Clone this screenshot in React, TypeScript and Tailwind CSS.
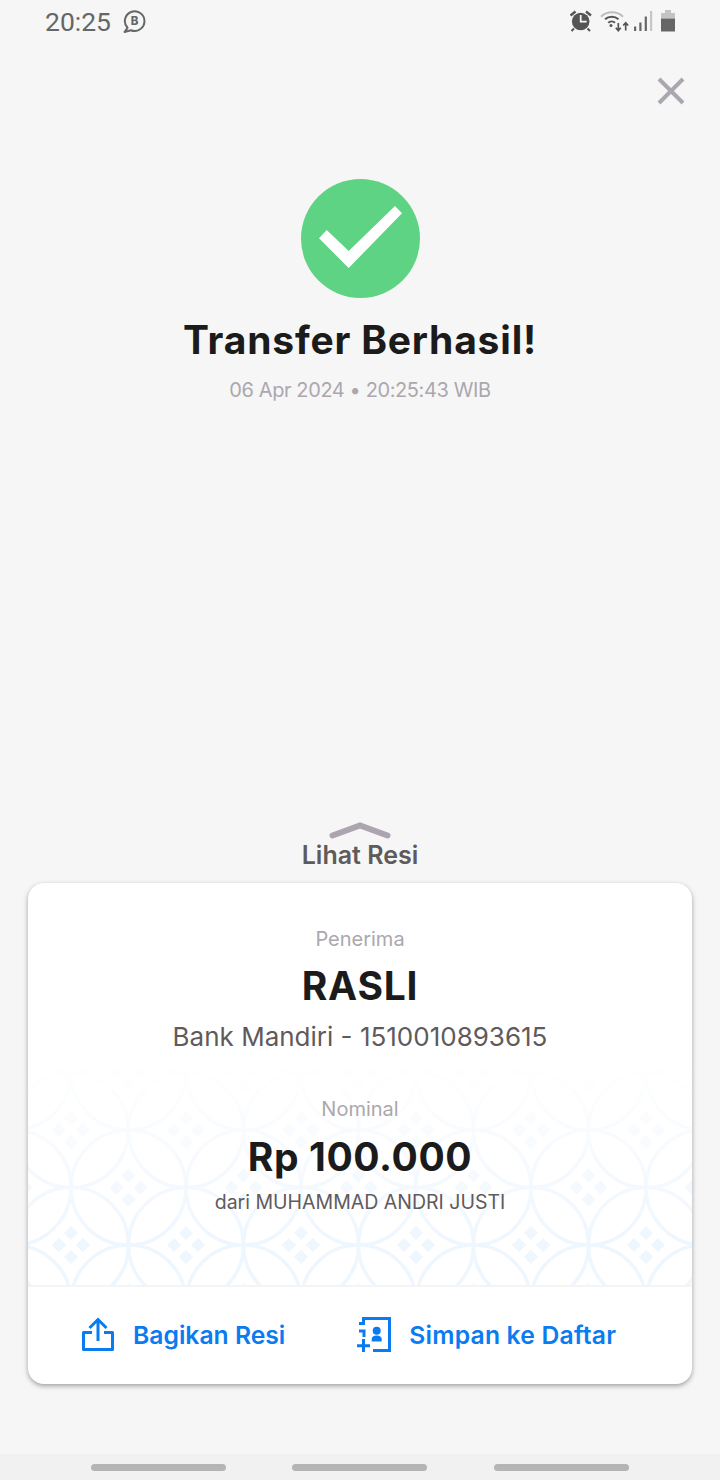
const FONT = "font-['Inter','Noto_Sans',sans-serif]";

function WhatsAppBusiness() {
  return (
    <svg width="24" height="24" viewBox="0 0 24 24" fill="none">
      <path
        d="M5.500 17.800A9.800 9.800 0 1 1 9 20.200L2.500 22z"
        stroke="#666"
        strokeWidth="2"
        strokeLinejoin="round"
      />
      <text x="12.500" y="15" textAnchor="middle" fontSize="11.500" fontWeight="800" fill="#666">
        B
      </text>
    </svg>
  );
}

function StatusIcons() {
  return (
    <svg width="108" height="24" viewBox="0 0 108 24" fill="none" className="mt-[-2px]">
      {/* alarm */}
      <circle cx="11.700" cy="12.500" r="8.800" fill="#555" />
      <path d="M11.700 6v6.700h6" stroke="#f6f6f6" strokeWidth="1.800" />
      <path d="M1.500 6.500L6.500 2.500M22 6.500L17 2.500" stroke="#555" strokeWidth="2.400" />
      <path d="M2.500 22l2.500-2.500M21 22l-2.500-2.500" stroke="#555" strokeWidth="2" />
      {/* wifi */}
      <path d="M32 7.700a16 16 0 0 1 22 0" stroke="#bdbdbd" strokeWidth="2" />
      <path d="M36 10.300a10 10 0 0 1 13.500 0" stroke="#555" strokeWidth="2" />
      <path d="M39.300 13.700a5 5 0 0 1 6.700 0" stroke="#555" strokeWidth="2" />
      <circle cx="42" cy="16.500" r="1.500" fill="#555" />
      <path d="M49.300 14v7.500M46.800 18.800l2.500 2.800 2.500-2.800" stroke="#555" strokeWidth="1.700" />
      <path d="M56.700 21.500V14M54.200 16.500l2.500-2.800 2.500 2.800" stroke="#555" strokeWidth="1.700" />
      {/* signal */}
      <rect x="65" y="17.500" width="2.200" height="4.500" fill="#666" />
      <rect x="70.300" y="13.500" width="2.200" height="8.500" fill="#666" />
      <rect x="75.700" y="7.500" width="2.200" height="14.500" fill="#666" />
      <rect x="81" y="2" width="2.200" height="20" fill="#c6c6c6" />
      {/* battery */}
      <path d="M96 1h6v3h4v5.500H92V4h4z" fill="#c4c4c4" />
      <rect x="92" y="9.500" width="14" height="13" fill="#666" />
    </svg>
  );
}

function Diamonds({ x, y }: { x: number; y: number }) {
  return (
    <g transform={`translate(${x} ${y})`}>
      <path d="M0 -19l7 7-7 7-7-7z" />
      <path d="M0 5l7 7-7 7-7-7z" />
      <path d="M-19 0l7-7 7 7-7 7z" />
      <path d="M5 0l7-7 7 7-7 7z" />
    </g>
  );
}

function Kawung() {
  return (
    <svg className="absolute inset-0 h-full w-full" fill="none">
      <defs>
        <pattern id="kawung" width="115" height="115" patternUnits="userSpaceOnUse" x="43" y="71">
          <g stroke="#eef6fe" strokeWidth="3.500">
            <circle cx="0" cy="0" r="57.500" />
            <circle cx="115" cy="0" r="57.500" />
            <circle cx="0" cy="115" r="57.500" />
            <circle cx="115" cy="115" r="57.500" />
            <circle cx="57.500" cy="57.500" r="57.500" />
          </g>
          <g fill="#eef6fe">
            <Diamonds x={0} y={0} />
            <Diamonds x={115} y={0} />
            <Diamonds x={0} y={115} />
            <Diamonds x={115} y={115} />
            <Diamonds x={57.5} y={57.5} />
          </g>
        </pattern>
        <linearGradient id="kawungFade" x1="0" y1="0" x2="0" y2="1">
          <stop offset="0" stopColor="#fff" stopOpacity="1" />
          <stop offset="0.35" stopColor="#fff" stopOpacity="0.6" />
          <stop offset="0.85" stopColor="#fff" stopOpacity="0" />
        </linearGradient>
      </defs>
      <rect width="100%" height="100%" fill="url(#kawung)" />
      <rect width="100%" height="100%" fill="url(#kawungFade)" />
    </svg>
  );
}

function ShareIcon() {
  return (
    <svg width="34" height="36" viewBox="0 0 34 36" fill="none" stroke="#0a7cf0" strokeWidth="3">
      <path d="M11 15.500H2.500v17h29v-17H23" strokeLinejoin="round" />
      <path d="M17 24V3M8.500 11L17 2.500 25.500 11" />
    </svg>
  );
}

function ContactAddIcon() {
  return (
    <svg width="34" height="36" viewBox="0 0 34 36" fill="none">
      <path d="M2 6.500H6.500V1.500H32.500V33.500H16" stroke="#0a7cf0" strokeWidth="3" />
      <path d="M2 14H7V20" stroke="#0a7cf0" strokeWidth="3" />
      <path d="M0 28.700h13M6.500 22v13" stroke="#0a7cf0" strokeWidth="3" />
      <circle cx="19.700" cy="13.700" r="4" fill="#0a7cf0" />
      <path d="M14.700 24.500v-2.500c0-2 2-3.500 5-3.500s5 1.500 5 3.500v2.500z" fill="#0a7cf0" />
    </svg>
  );
}

export default function App() {
  return (
    <div className={`${FONT} flex h-[1480px] w-[720px] flex-col bg-[#f6f6f6]`}>
      <div className="flex h-[44px] items-center justify-between pl-[45px] pr-[43px]">
        <div className="flex items-center gap-[11px]">
          <span className="text-[26.500px] leading-none text-[#666] font-['Roboto',sans-serif]">20:25</span>
          <WhatsAppBusiness />
        </div>
        <StatusIcons />
      </div>

      <div className="flex justify-end pr-[35px] pt-[33px]">
        <svg width="28" height="28" viewBox="0 0 28 28" fill="none">
          <path d="M2 2L26 26M26 2L2 26" stroke="#aca7ae" strokeWidth="4" />
        </svg>
      </div>

      <div className="flex flex-col items-center pt-[74px]">
        <div className="h-[119px] w-[119px] rounded-full bg-[#5ed384]">
          <svg width="119" height="119" viewBox="0 0 119 119">
            <path d="M101 34.300L94 27 47.700 72 25.700 51 18 59.300 47.700 89z" fill="#fff" />
          </svg>
        </div>
        <h1 className="mt-[20px] text-[39px] font-bold leading-[44px] tracking-[0.8px] text-[#1b1b1b]">
          Transfer Berhasil!
        </h1>
        <p className="mt-[16px] text-[20px] leading-[24px] tracking-[-0.4px] text-[#aca7ae]">
          06 Apr 2024 • 20:25:43 WIB
        </p>
      </div>

      <div className="flex-1" />

      <div className="flex flex-col items-center">
        <svg width="62" height="18" viewBox="0 0 62 18" fill="none">
          <path d="M3.500 13.500L31 3.500l27.500 10" stroke="#aca4ae" strokeWidth="6" strokeLinecap="round" />
        </svg>
        <span className="text-[25px] font-semibold leading-[30px] text-[#5f5a5c]">Lihat Resi</span>
      </div>

      <div className="mx-[28px] mt-[13px] overflow-hidden rounded-[16px] bg-white shadow-[0_2px_5px_rgba(0,0,0,0.35)]">
        <div className="relative h-[402px]">
          <div className="absolute inset-x-0 bottom-0 h-[226px]">
            <Kawung />
          </div>
          <div className="relative flex flex-col items-center pt-[44px]">
            <span className="text-[20px] leading-[24px] text-[#aca7ae]">Penerima</span>
            <span className="mt-[11px] text-[39px] font-bold leading-[48px] tracking-[0.8px] text-[#1b1b1b]">RASLI</span>
            <span className="mt-[9px] text-[26px] leading-[36px] text-[#5f5a5c]">Bank Mandiri - 1510010893615</span>
            <span className="mt-[42px] text-[20px] leading-[24px] text-[#aca7ae]">Nominal</span>
            <span className="mt-[12px] text-[39px] font-bold leading-[48px] tracking-[0.6px] text-[#1b1b1b]">Rp 100.000</span>
            <span className="mt-[6px] text-[19.500px] leading-[30px] text-[#5f5a5c]">dari MUHAMMAD ANDRI JUSTI</span>
          </div>
        </div>
        <div className="flex h-[99px] items-center border-t-2 border-[#f4f4f4] pl-[53px]">
          <div className="flex items-center gap-[18px]">
            <ShareIcon />
            <span className="text-[24.700px] font-semibold text-[#0a7cf0]">Bagikan Resi</span>
          </div>
          <div className="ml-[72px] flex items-center gap-[18px]">
            <ContactAddIcon />
            <span className="text-[24.700px] font-semibold tracking-[0.2px] text-[#0a7cf0]">Simpan ke Daftar</span>
          </div>
        </div>
      </div>

      <div className="mt-[70px] flex h-[26px] items-center gap-[66px] bg-[#f1f1f1] pl-[91px]">
        <div className="h-[7px] w-[135px] rounded-full bg-[#b5b5b5]" />
        <div className="h-[7px] w-[135px] rounded-full bg-[#b5b5b5]" />
        <div className="ml-px h-[7px] w-[135px] rounded-full bg-[#b5b5b5]" />
      </div>
    </div>
  );
}
